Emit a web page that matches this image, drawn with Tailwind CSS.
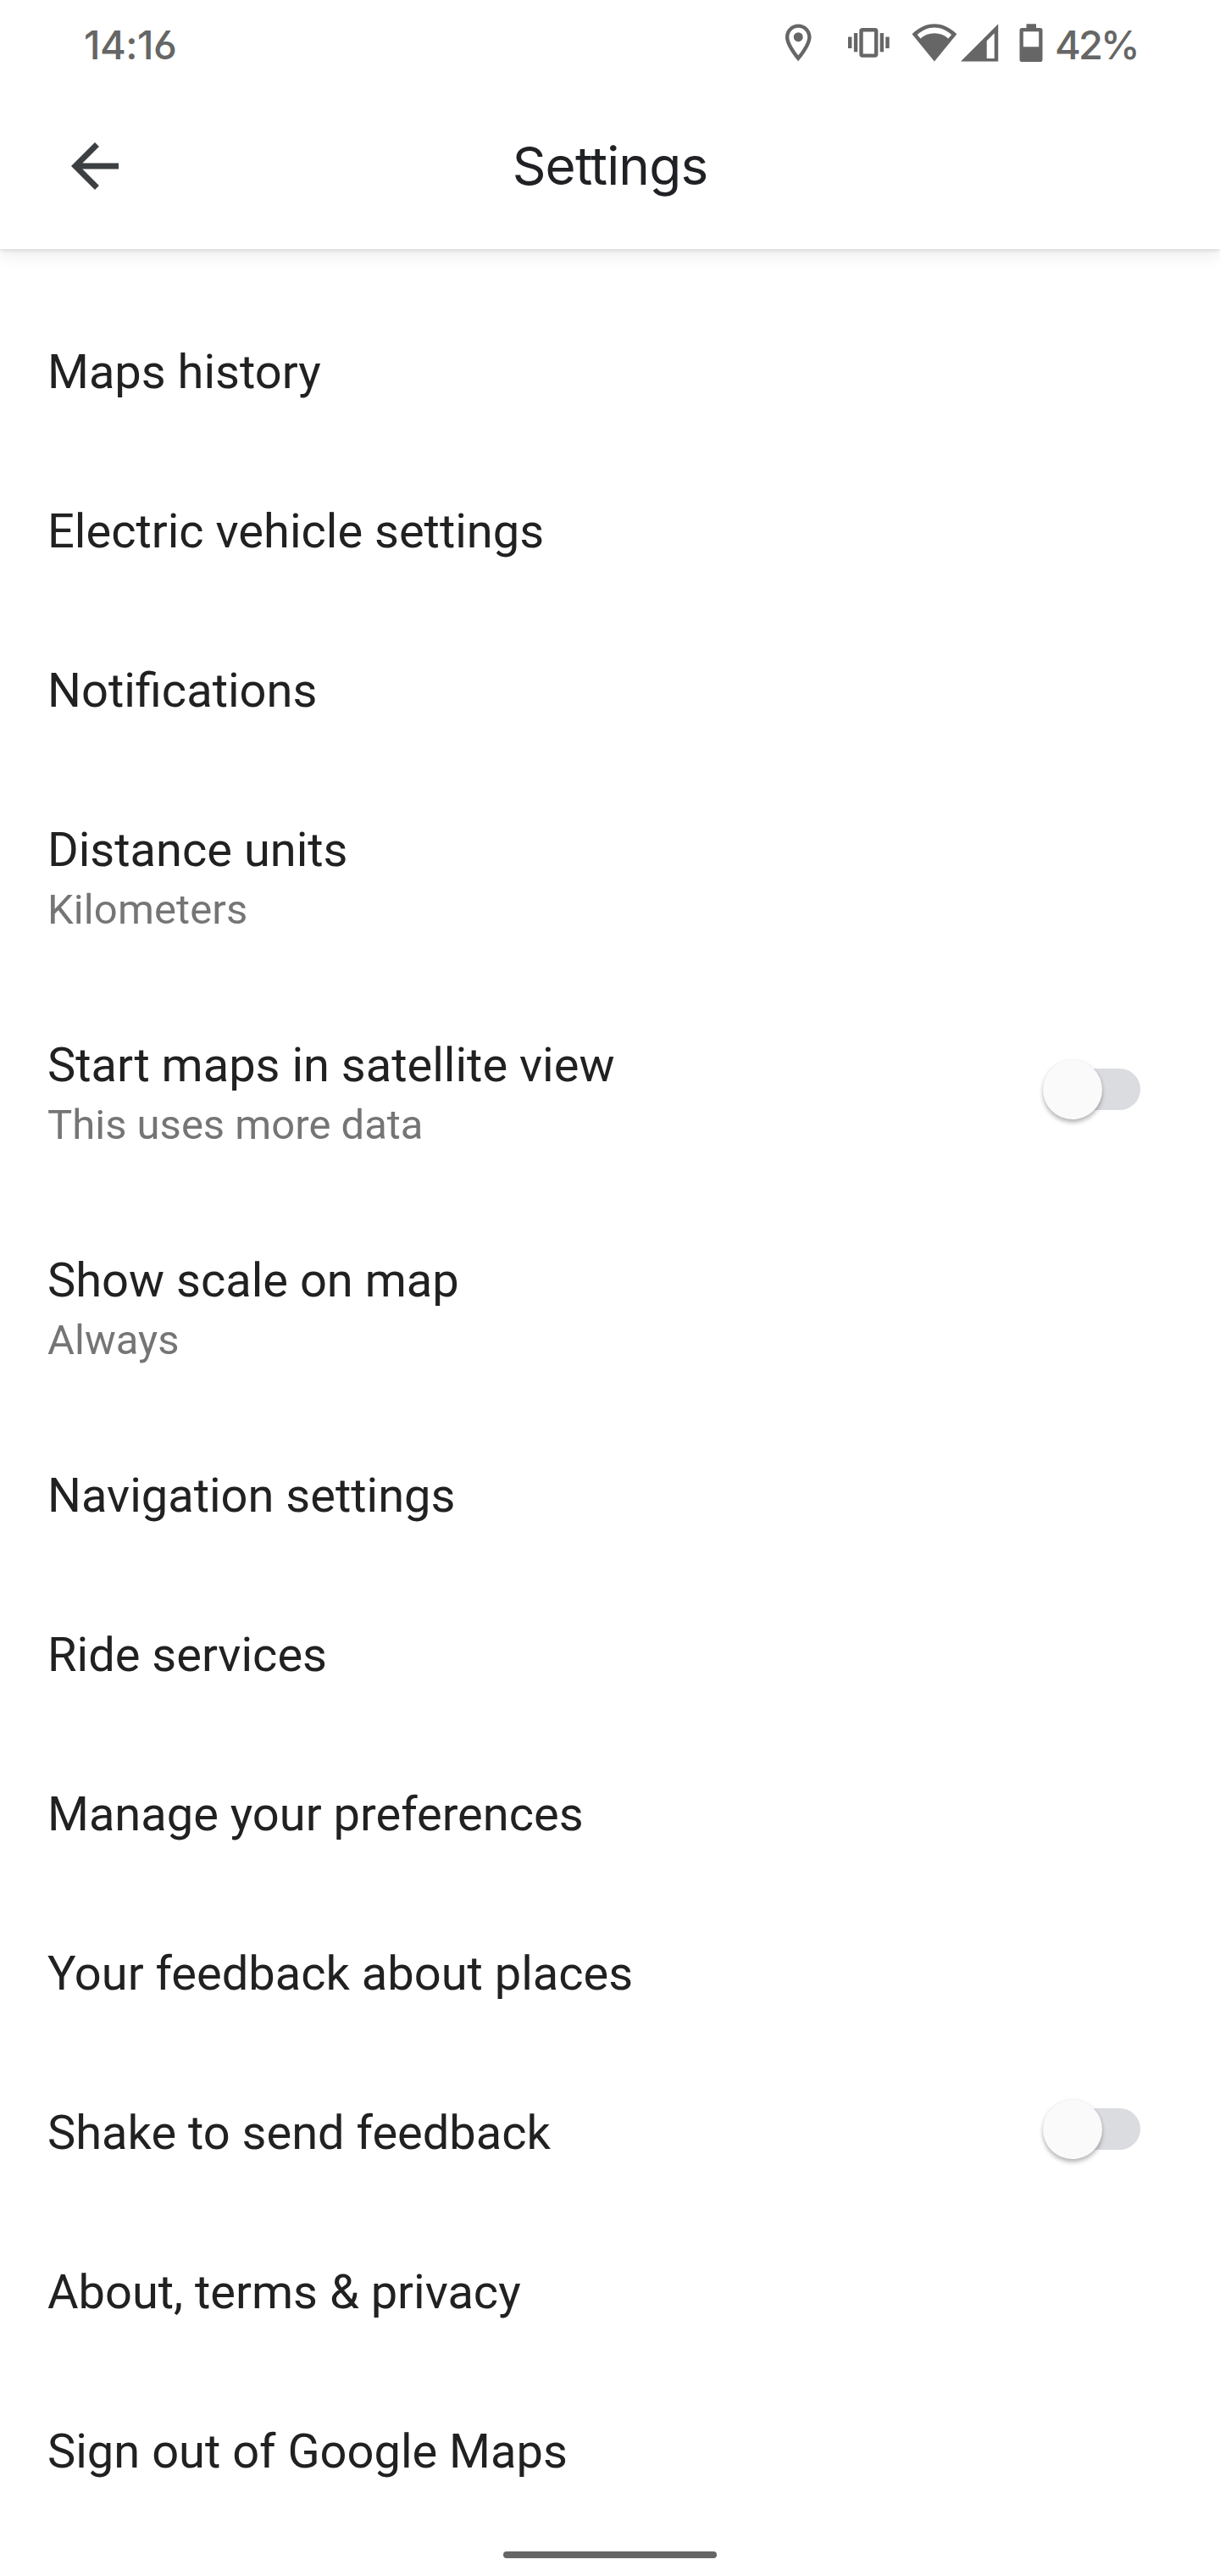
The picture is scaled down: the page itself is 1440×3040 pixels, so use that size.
<!DOCTYPE html>
<html lang="en">
<head>
    <meta charset="UTF-8">
    <title>Settings</title>
    <script src="https://cdn.jsdelivr.net/npm/@tailwindcss/browser@4"></script>
</head>
<body class="bg-white w-[1440px] h-[3040px] flex flex-col overflow-hidden font-[Roboto,sans-serif] text-[#212121]">
    <!-- Header -->
    <header class="bg-white h-[294px] shrink-0 shadow-[0_2px_4px_rgba(0,0,0,0.11),0_8px_18px_rgba(0,0,0,0.07)]">
        <!-- Status bar -->
        <div class="h-[100px] flex items-start pt-6 pl-[99px] pr-[97px] text-[#666666] font-[Inter,sans-serif] text-[47px] font-medium leading-[58px]">
            <span class="tracking-[-0.5px] [font-feature-settings:'cv03']">14:16</span>
            <div class="ml-auto flex items-start">
                <svg class="w-[52.5px] h-[52.5px]" viewBox="0 0 24 24" fill="currentColor"><path d="M12 2C8.13 2 5 5.13 5 9c0 5.25 7 13 7 13s7-7.75 7-13c0-3.87-3.13-7-7-7zM7 9c0-2.76 2.24-5 5-5s5 2.24 5 5c0 2.88-2.88 7.19-5 9.88C9.92 16.21 7 11.85 7 9z"/><circle cx="12" cy="9" r="2.5"/></svg>
                <svg class="w-[50px] h-[52px] ml-[32px]" viewBox="1000 24 50 52" fill="currentColor"><path d="M1001 43.5h4.4v13.4h-4.4zM1007.9 39h4.3v22.3h-4.3zM1038.7 39h4.3v22.3h-4.3zM1045.3 43.5h4.4v13.4h-4.4z"/><rect x="1016.5" y="35.2" width="17.7" height="30.4" rx="1.5" fill="none" stroke="currentColor" stroke-width="4.4"/></svg>
                <svg class="w-[54px] h-[52px] ml-[25.5px]" viewBox="1075.5 24 54 52" fill="currentColor"><path fill-rule="evenodd" d="M1102.4 72.5L1076 40.2C1083.5 32.8 1092.5 28.3 1102.4 28.3S1121.3 32.8 1128.8 40.2zM1086 45.6C1090.5 41.5 1096 39.3 1102.4 39.3S1114.3 41.5 1118.8 45.6L1122.6 41C1116.7 35.6 1110 32.5 1102.4 32.5S1088.1 35.6 1082.2 41z"/></svg>
                <svg class="w-[46px] h-[52px] ml-[3px]" viewBox="1132.5 24 46 52" fill="currentColor"><path fill-rule="evenodd" d="M1133.5 72.5h44.2V28.3zM1164.2 69V48.2L1173.2 39.2V69z"/></svg>
                <svg class="w-[28px] h-[52px] ml-[24px]" viewBox="1202.5 24 28 52" fill="currentColor"><path fill-rule="evenodd" d="M1211 28.3h11.5V33h4.7a2.8 2.8 0 0 1 2.8 2.8v34.4a2.8 2.8 0 0 1-2.8 2.8h-21.4a2.8 2.8 0 0 1-2.8-2.8V35.8a2.8 2.8 0 0 1 2.8-2.8h5.2zM1207.3 37.2v18h18.4v-18z"/></svg>
                <span class="ml-[14px] tracking-[-2.8px]">42%</span>
            </div>
        </div>

        <!-- Title bar -->
        <div class="h-[194px] grid grid-cols-[1fr_auto_1fr] items-start px-[70px]">
            <svg class="w-[84px] h-[84px] mt-[54px] text-[#3c4043]" viewBox="0 0 24 24" fill="currentColor"><path d="M20 11H7.83l5.59-5.59L12 4l-8 8 8 8 1.41-1.41L7.83 13H20z"/></svg>
            <h1 class="mt-[56px] font-[Inter,sans-serif] text-[62px] leading-[80px] tracking-[-0.8px] text-[#202124]">Se<span class="tracking-[-2.6px]">t</span>tings</h1>
        </div>
    </header>

    <!-- Settings list -->
    <main class="mt-[51px] px-14 text-[56px] leading-[66px]">
        <div class="py-[61px]">Maps history</div>
        <div class="py-[61px]">Electric vehicle settings</div>
        <div class="py-[61px]">Notifications</div>
        <div class="py-[61px]">
            <div>Distance units</div>
            <div class="mt-[9px] -mb-px text-[49px] leading-[58px] tracking-[0.1px] text-[#757575]">Kilometers</div>
        </div>
        <div class="py-[61px] flex items-center justify-between">
            <div>
                <div>Start maps in satellite view</div>
                <div class="mt-[9px] -mb-px text-[49px] leading-[58px] text-[#757575]">This uses more data</div>
            </div>
            <div class="flex items-center w-[100px] h-[49px] mr-[38px] mb-[9px] rounded-full bg-[#dadce0]">
                <div class="w-[70px] h-[70px] -ml-[15px] shrink-0 rounded-full bg-[#fafafa] shadow-[0_4px_5px_rgba(0,0,0,0.25),0_0_4px_rgba(0,0,0,0.08)]"></div>
            </div>
        </div>
        <div class="py-[61px]">
            <div>Show scale on map</div>
            <div class="mt-[9px] -mb-px text-[49px] leading-[58px] text-[#757575]">Always</div>
        </div>
        <div class="py-[61px]">Navigation settings</div>
        <div class="py-[61px]">Ride services</div>
        <div class="py-[61px]">Manage your preferences</div>
        <div class="py-[61px]">Your feedback about places</div>
        <div class="py-[61px] flex items-center justify-between">
            <div>Shake to send feedback</div>
            <div class="flex items-center w-[100px] h-[49px] mr-[38px] mb-[9px] rounded-full bg-[#dadce0]">
                <div class="w-[70px] h-[70px] -ml-[15px] shrink-0 rounded-full bg-[#fafafa] shadow-[0_4px_5px_rgba(0,0,0,0.25),0_0_4px_rgba(0,0,0,0.08)]"></div>
            </div>
        </div>
        <div class="py-[61px]">About, terms &amp; privacy</div>
        <div class="py-[61px]">Sign out of Google Maps</div>
    </main>

    <!-- Gesture bar -->
    <div class="mt-6 mx-auto w-[252px] h-2 shrink-0 rounded-full bg-[#666666]"></div>
</body>
</html>
